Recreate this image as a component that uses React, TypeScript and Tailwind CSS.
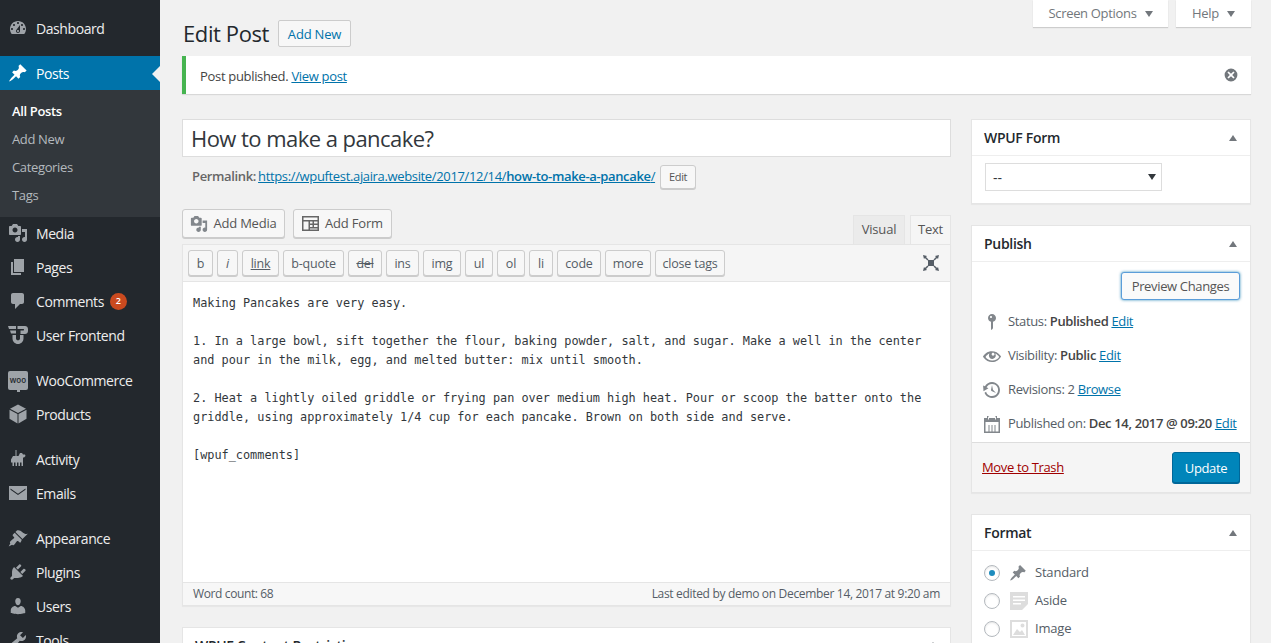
import type { ReactNode } from 'react'

const dashboardPath = 'M3.76 16h12.48c1.1-1.37 1.76-3.11 1.76-5 0-4.42-3.58-8-8-8s-8 3.58-8 8c0 1.89.66 3.63 1.76 5zM10 4c.55 0 1 .45 1 1s-.45 1-1 1-1-.45-1-1 .45-1 1-1zM6 6c.55 0 1 .45 1 1s-.45 1-1 1-1-.45-1-1 .45-1 1-1zm8 0c.55 0 1 .45 1 1s-.45 1-1 1-1-.45-1-1 .45-1 1-1zm-5.37 5.55L12 7v6c0 1.1-.9 2-2 2s-2-.9-2-2c0-.57.24-1.08.63-1.45zM4 10c.55 0 1 .45 1 1s-.45 1-1 1-1-.45-1-1 .45-1 1-1zm12 0c.55 0 1 .45 1 1s-.45 1-1 1-1-.45-1-1 .45-1 1-1zm-5 3c0-.55-.45-1-1-1s-1 .45-1 1 .45 1 1 1 1-.45 1-1z'
const pinPath = 'M10.44 3.02l1.82-1.82 6.36 6.35-1.83 1.82c-1.05-.68-2.48-.57-3.41.36l-.75.75c-.92.93-1.04 2.35-.35 3.41l-1.83 1.82-2.41-2.41-2.8 2.79c-.42.42-3.38 2.71-3.8 2.29s1.86-3.39 2.28-3.81l2.79-2.79L4.1 9.36l1.83-1.82c1.05.69 2.48.57 3.41-.36l.75-.75c.93-.92 1.04-2.35.35-3.41z'
const mediaPath = 'M13 11V4c0-.55-.45-1-1-1h-1.67L9 1H5L3.67 3H2c-.55 0-1 .45-1 1v7c0 .55.45 1 1 1h10c.55 0 1-.45 1-1zM7 4.5c1.38 0 2.5 1.12 2.5 2.5S8.38 9.5 7 9.5 4.5 8.38 4.5 7 5.62 4.5 7 4.5zM14 6h5v10.5c0 1.38-1.12 2.5-2.5 2.5S14 17.88 14 16.5s1.12-2.5 2.5-2.5c.17 0 .34.02.5.05V9h-3V6zm-4 8.05V13h2v3.5c0 1.38-1.12 2.5-2.5 2.5S7 17.88 7 16.5 8.12 14 9.5 14c.17 0 .34.02.5.05z'
const pagePath = 'M6 15V2h10v13H6zm-1 1h8v2H3V5h2v11z'
const commentPath = 'M5 2h9c1.1 0 2 .9 2 2v7c0 1.1-.9 2-2 2h-2l-5 5v-5H5c-1.1 0-2-.9-2-2V4c0-1.1.9-2 2-2z'
const frontendPath = 'M0 1h8v3H1zM2 5.500h6v3H3zM4.500 10H8v3.500c0 1 .9 1.800 2 1.800s2-.8 2-1.800V10h3.500v3.500c0 3-2.500 5.500-5.500 5.500s-5.500-2.500-5.500-5.500zM9.500 1H17c1.700 0 3 1.200 3 3v2c0 1.700-1.300 3-3 3h-4.500V5.500h3c.7 0 .7-1.500 0-1.500h-6z'
const cubePath = 'M10 .5l8 4.300-8 4.200-8-4.200zM1.500 5.800l8 4.200v9.500l-8-4.700zM18.500 5.800v9l-8 4.700V10z'
const mailPath = 'M1 3h18v14H1zM2.500 5.500v1.300L10 12l7.500-5.200V5.500L10 10.700z'
const brushPath = 'M14.480 11.060L7.410 3.990l1.500-1.500c.5-.56 2.300-.47 3.510.32 1.210.8 1.430 1.280 2.910 2.100 1.180.64 2.450 1.260 4.450.85zm-.71.71L6.700 4.700 4.930 6.470c-.39.39-.39 1.020 0 1.410l1.060 1.060c.39.39.39 1.030 0 1.420-.6.6-1.430 1.110-2.210 1.690-.35.26-.7.53-1.010.84-1.340 1.340-.9 1.800-.4 2.300l-1.700 3.300 3.400-1.700c.6.5 1.100.8 2.300-.4.310-.31.58-.66.85-1.010.57-.78 1.080-1.610 1.690-2.210.39-.39 1.020-.39 1.410 0l1.060 1.060c.39.39 1.020.39 1.410 0z'
const plugPath = 'M13.110 4.360L9.870 7.600 8 5.730l3.240-3.240c.35-.34 1.050-.2 1.560.32.52.51.66 1.210.31 1.550zm-8 1.770l.91-1.120 9.010 9.010-1.190.84c-.71.71-2.630 1.160-3.820 1.160H6.140L4.900 17.260c-.59.59-1.540.59-2.120 0-.59-.58-.59-1.530 0-2.120l1.240-1.240v-3.880c0-1.130.4-3.190 1.090-3.890zm7.260 3.970l3.240-3.240c.34-.35 1.040-.21 1.550.31.52.51.66 1.210.31 1.550l-3.240 3.250z'
const userPath = 'M10 9.250c-2.270 0-2.730-3.440-2.730-3.440C7 4.020 7.820 2 9.970 2c2.160 0 2.980 2.020 2.710 3.810 0 0-.41 3.440-2.680 3.440zm0 2.570L12.720 10c2.390 0 4.520 2.330 4.520 4.530v2.490s-3.650 1.130-7.240 1.130c-3.650 0-7.240-1.130-7.240-1.130v-2.490c0-2.250 1.940-4.480 4.470-4.480z'
const toolPath = 'M16.680 9.770c-1.340 1.340-3.300 1.670-4.950.99l-5.410 6.520c-.99.99-2.590.99-3.580 0s-.99-2.590 0-3.570l6.520-5.420c-.68-1.650-.35-3.610.99-4.950 1.280-1.280 3.120-1.620 4.720-1.060l-2.890 2.890 2.820 2.820 2.860-2.870c.53 1.580.18 3.390-1.080 4.650zM3.810 16.210c.4.39 1.040.39 1.430 0 .4-.4.4-1.040 0-1.430-.39-.4-1.030-.4-1.430 0-.39.39-.39 1.030 0 1.430z'
const activityPath = 'M7.500 1h1v6h2l1.500-3h2l1 1.500h2l.5 1.500-1.500 1.500H15V17h-1.500v-3.500H12V17h-1.500v-3.500H9V17H7.500v-3.500H6V17H4.500v-3.500H3V10.500L5 7h2.500z'

function Dash({ d, className }: { d: string; className: string }) {
  return (
    <svg viewBox="0 0 20 20" className={className} fill="currentColor" fillRule="evenodd">
      <path d={d} />
    </svg>
  )
}

function WooIcon() {
  return (
    <div className="relative w-5 h-[19px] rounded-[2px] bg-[#9ea3a8] flex items-center justify-center">
      <span className="text-[8px] leading-none text-[#23282d] font-['Open_Sans',sans-serif] font-semibold">woo</span>
      <span className="absolute left-[9px] -bottom-[2px] w-[3px] h-[3px] bg-[#9ea3a8]"></span>
    </div>
  )
}

function NavItem({ icon, label, badge, current }: { icon: ReactNode; label: string; badge?: string; current?: boolean }) {
  return (
    <div className={current ? 'relative h-[34px] flex items-center bg-[#0073aa] text-white' : 'relative h-[34px] flex items-center text-[#eeeeee]'}>
      <div className={current ? 'w-9 flex justify-center text-white' : 'w-9 flex justify-center text-[#9ea3a8]'}>{icon}</div>
      <span className="text-[14px] tracking-[-0.42px]">{label}</span>
      {badge && (
        <span className="ml-[6px] w-[17px] h-[17px] rounded-full bg-[#ca4a1f] text-white text-[9px] font-semibold flex items-center justify-center">{badge}</span>
      )}
      {current && (
        <span className="absolute right-0 top-[10px] w-0 h-0 border-y-[8px] border-y-transparent border-r-[8px] border-r-[#f1f1f1]"></span>
      )}
    </div>
  )
}

function Sidebar() {
  const ic = 'w-5 h-5'
  return (
    <aside className="w-40 shrink-0 bg-[#23282d] pt-[11px]">
      <NavItem icon={<Dash d={dashboardPath} className={ic} />} label="Dashboard" />
      <div className="h-[11px]"></div>
      <NavItem current icon={<Dash d={pinPath} className={ic} />} label="Posts" />
      <div className="bg-[#32373c] pt-[8px] pb-[7px] text-[13px] tracking-[-0.35px]">
        <div className="h-7 pl-3 flex items-center text-white font-semibold">All Posts</div>
        <div className="h-7 pl-3 flex items-center text-[#b4b9be]">Add New</div>
        <div className="h-7 pl-3 flex items-center text-[#b4b9be]">Categories</div>
        <div className="h-7 pl-3 flex items-center text-[#b4b9be]">Tags</div>
      </div>
      <div className="-mt-px">
        <NavItem icon={<Dash d={mediaPath} className={ic} />} label="Media" />
      </div>
      <NavItem icon={<Dash d={pagePath} className={ic} />} label="Pages" />
      <NavItem icon={<Dash d={commentPath} className={ic} />} label="Comments" badge="2" />
      <NavItem icon={<Dash d={frontendPath} className={ic} />} label="User Frontend" />
      <div className="h-[11px]"></div>
      <NavItem icon={<WooIcon />} label="WooCommerce" />
      <NavItem icon={<Dash d={cubePath} className={ic} />} label="Products" />
      <div className="h-[11px]"></div>
      <NavItem icon={<Dash d={activityPath} className={ic} />} label="Activity" />
      <NavItem icon={<Dash d={mailPath} className={ic} />} label="Emails" />
      <div className="h-[11px]"></div>
      <NavItem icon={<Dash d={brushPath} className={ic} />} label="Appearance" />
      <NavItem icon={<Dash d={plugPath} className={ic} />} label="Plugins" />
      <NavItem icon={<Dash d={userPath} className={ic} />} label="Users" />
      <NavItem icon={<Dash d={toolPath} className={ic} />} label="Tools" />
    </aside>
  )
}

function TabButton({ label, className }: { label: string; className: string }) {
  return (
    <div className={'h-[27px] bg-white shadow-[0_1px_1px_rgba(0,0,0,0.15)] flex items-center justify-center gap-[8px] text-[13px] tracking-[-0.32px] text-[#72777c] ' + className}>
      {label}
      <span className="w-0 h-0 border-x-[4.5px] border-x-transparent border-t-[6px] border-t-[#72777c]"></span>
    </div>
  )
}

function Toolbar() {
  const buttons = [
    { label: 'b', w: 'w-[25px]' },
    { label: 'i', w: 'w-[21px] italic' },
    { label: 'link', w: 'w-[37px] underline' },
    { label: 'b-quote', w: 'w-[61px]' },
    { label: 'del', w: 'w-[34px] line-through' },
    { label: 'ins', w: 'w-[33px]' },
    { label: 'img', w: 'w-[38px]' },
    { label: 'ul', w: 'w-[28px]' },
    { label: 'ol', w: 'w-[28px]' },
    { label: 'li', w: 'w-[24px]' },
    { label: 'code', w: 'w-[44px]' },
    { label: 'more', w: 'w-[46px]' },
    { label: 'close tags', w: 'w-[70px]' },
  ]
  return (
    <div className="h-[37px] bg-[#f5f5f5] border-b border-[#e5e5e5] flex items-center pl-[5px] pr-[9px] gap-1">
      {buttons.map((b) => (
        <div
          key={b.label}
          className={'h-[26px] pt-[2px] rounded-[3px] bg-[#f7f7f7] border border-[#cccccc] shadow-[0_1px_0_#cccccc] flex items-center justify-center text-[12.500px] tracking-[-0.2px] text-[#555d66] ' + b.w}
        >
          {b.label}
        </div>
      ))}
      <svg viewBox="0 0 20 20" className="ml-auto w-[20px] h-[20px] text-[#555d66]" fill="currentColor">
        <path d="M7 7h6v6H7zM2 2l4 1-1 .9L7.500 6.500 6.500 7.500 3.900 5 3 6zM18 2l-1 4-.9-1-2.600 2.500-1-1L15 3.900 14 3zM2 18l1-4 .9 1 2.600-2.500 1 1L5 16.100 6 17zM18 18l-4-1 1-.9-2.500-2.600 1-1 2.600 2.500.9-1z" />
      </svg>
    </div>
  )
}

function Editor() {
  return (
    <div>
      <div className="h-[35px] flex items-end justify-between">
        <div className="flex gap-[8px] mb-[6px] text-[13px] tracking-[-0.2px] text-[#555555]">
          <div className="h-[29px] w-[103px] rounded-[3px] bg-[#f7f7f7] border border-[#cccccc] shadow-[0_1px_0_#cccccc] flex items-center justify-center gap-[5px]">
            <Dash d={mediaPath} className="w-[18px] h-[18px] text-[#82878c]" />
            Add Media
          </div>
          <div className="h-[29px] w-[99px] rounded-[3px] bg-[#f7f7f7] border border-[#cccccc] shadow-[0_1px_0_#cccccc] flex items-center justify-center gap-[6px]">
            <svg viewBox="0 0 17 15" className="w-[17px] h-[15px] text-[#666666]" fill="currentColor" fillRule="evenodd">
              <path d="M0 0h17v15H0zM1.500 1.500v2.500h14V1.500zM1.500 5.500v8h5v-8zM8 5.500v2h2.500v-2zM12 5.500v2h3.500v-2zM8 9v2h2.500V9zM12 9v2h3.500V9zM8 12.500v1h7.500v-1z" />
            </svg>
            Add Form
          </div>
        </div>
        <div className="flex gap-[5px] text-[13px] tracking-[-0.2px] text-[#555555]">
          <div className="h-[29px] w-[52px] bg-[#ebebeb] border border-[#e5e5e5] border-b-0 flex items-center justify-center">Visual</div>
          <div className="h-[29px] w-[41px] bg-[#f5f5f5] border border-[#e5e5e5] border-b-0 flex items-center justify-center mr-0">Text</div>
        </div>
      </div>
      <div className="border border-[#e5e5e5] bg-white shadow-[0_1px_1px_rgba(0,0,0,0.04)]">
        <Toolbar />
        <div className="h-[300px] bg-white pl-[10px] pt-[12px] pr-[10px] font-['DejaVu_Sans_Mono',monospace] text-[11.870px] leading-[19px] text-[#32373c] whitespace-pre-wrap">
          <p>Making Pancakes are very easy.</p>
          <p className="mt-[19px]">1. In a large bowl, sift together the flour, baking powder, salt, and sugar. Make a well in the center<br />and pour in the milk, egg, and melted butter: mix until smooth.</p>
          <p className="mt-[19px]">2. Heat a lightly oiled griddle or frying pan over medium high heat. Pour or scoop the batter onto the<br />griddle, using approximately 1/4 cup for each pancake. Brown on both side and serve.</p>
          <p className="mt-[19px]">[wpuf_comments]</p>
        </div>
        <div className="h-[23px] bg-[#f7f7f7] border-t border-[#e5e5e5] flex items-center justify-between px-[10px] text-[12px] text-[#555d66]">
          <span className="tracking-[-0.38px]">Word count: 68</span>
          <span className="tracking-[-0.32px]">Last edited by demo on December 14, 2017 at 9:20 am</span>
        </div>
      </div>
    </div>
  )
}

function Postbox({ title, children, className }: { title: string; children?: ReactNode; className?: string }) {
  return (
    <section className={'bg-white border border-[#e5e5e5] shadow-[0_1px_1px_rgba(0,0,0,0.04)] ' + (className ?? '')}>
      <div className="h-[36px] border-b border-[#eeeeee] flex items-center justify-between pl-[12px] pr-[13px]">
        <h2 className="text-[14px] font-semibold tracking-[-0.3px] text-[#23282d]">{title}</h2>
        <span className="w-0 h-0 border-x-[4px] border-x-transparent border-b-[6px] border-b-[#72777c]"></span>
      </div>
      {children}
    </section>
  )
}

function MetaRow({ icon, children }: { icon: ReactNode; children: ReactNode }) {
  return (
    <div className="h-[34px] flex items-center pl-[10px] text-[13px] tracking-[-0.35px] text-[#555d66]">
      <div className="w-[26px] flex text-[#82878c]">{icon}</div>
      <span>{children}</span>
    </div>
  )
}

function FormatRow({ label, checked, icon }: { label: string; checked?: boolean; icon: ReactNode }) {
  return (
    <div className="h-[28px] flex items-center pl-[12px] text-[13px] tracking-[-0.2px] text-[#555d66]">
      <span className="w-4 h-4 rounded-full border border-[#b4b9be] bg-white shadow-[inset_0_1px_2px_rgba(0,0,0,0.1)] flex items-center justify-center">
        {checked && <span className="w-[6px] h-[6px] rounded-full bg-[#1e8cbe]"></span>}
      </span>
      <span className="ml-[9px] w-[26px] flex">{icon}</span>
      <span>{label}</span>
    </div>
  )
}

function Sidebox() {
  const lnk = 'text-[#0073aa] underline'
  const b = 'font-semibold text-[#444444]'
  return (
    <div className="w-[280px] shrink-0">
      <Postbox title="WPUF Form" className="h-[85px]">
        <div className="pl-[13px] pt-[7px]">
          <div className="relative w-[177px] h-[28px] border border-[#dddddd] bg-white flex items-center pl-[7px] text-[14px] text-[#32373c]">
            --
            <span className="absolute right-[5px] top-[10px] w-0 h-0 border-x-[4px] border-x-transparent border-t-[6px] border-t-[#32373c]"></span>
          </div>
        </div>
      </Postbox>
      <Postbox title="Publish" className="mt-[21px]">
        <div className="h-[180px] pt-[10px]">
          <div className="flex justify-end pr-[10px]">
            <div className="w-[119px] h-[28px] pt-[2px] rounded-[3px] bg-[#fafafa] border border-[#5b9dd9] shadow-[0_0_3px_rgba(0,115,170,0.8)] flex items-center justify-center text-[13px] tracking-[-0.35px] text-[#555555]">Preview Changes</div>
          </div>
          <div className="mt-[5px]">
            <MetaRow icon={<Dash d="M14 6c0 1.860-1.280 3.410-3 3.860V16c0 1-2 2-2 2V9.860c-1.720-.45-3-2-3-3.860 0-2.210 1.790-4 4-4s4 1.790 4 4zM8 5c0 .55.45 1 1 1s1-.45 1-1-.45-1-1-1-1 .45-1 1z" className="w-5 h-5" />}>
              Status: <span className={b}>Published</span> <span className={lnk}>Edit</span>
            </MetaRow>
            <MetaRow icon={<Dash d="M18.300 9.500C15 4.900 8.500 3.800 3.900 7.200c-1.200.9-2.200 2.100-3 3.400.2.4.5.8.8 1.200 3.300 4.600 9.600 5.600 14.200 2.400.9-.7 1.700-1.400 2.400-2.400.3-.4.5-.8.8-1.200-.3-.4-.5-.8-.8-1.100zM10 7.200c.6-.6 1.500-.6 2.100 0s.6 1.500 0 2.100-1.500.6-2.100 0c-.5-.6-.5-1.500 0-2.100zm0 7.400c-2.600 0-5.100-1.400-6.500-3.600 1-1.500 2.400-2.700 4-3.400-.4.6-.6 1.200-.6 1.900 0 1.900 1.600 3.500 3.500 3.400 1.900 0 3.400-1.600 3.400-3.400 0-.7-.2-1.300-.6-1.900 1.600.7 3 1.900 4 3.400-1.500 2.200-3.900 3.600-6.600 3.600z" className="w-5 h-5" />}>
              Visibility: <span className={b}>Public</span> <span className={lnk}>Edit</span>
            </MetaRow>
            <MetaRow icon={<Dash d="M13.650 2.880c3.930 2.010 5.480 6.840 3.470 10.770s-6.830 5.480-10.770 3.470c-1.870-.96-3.200-2.560-3.860-4.400l1.640-1.030c.45 1.570 1.520 2.950 3.080 3.760 3.010 1.540 6.690.35 8.230-2.660 1.550-3.010.36-6.690-2.650-8.240C9.780 3.010 6.100 4.200 4.560 7.210l1.880.97-4.950 3.080-.39-5.820 1.780.91C4.900 2.400 9.750.89 13.650 2.880zm-4.360 7.830C9.110 10.530 9 10.280 9 10c0-.07.03-.12.04-.19h-.01L10 5l.97 4.810L14 13l-4.500-2.120.02-.02c-.08-.04-.16-.09-.23-.15z" className="w-5 h-5" />}>
              Revisions: 2 <span className={lnk}>Browse</span>
            </MetaRow>
            <MetaRow icon={<Dash d="M2 4h3V2h2v2h6V2h2v2h3v15H2zM3.500 8v9.500h3V11h1v6.500h2V11h1v6.500h2V11h1v6.500h3V8zM6 2.500v3h.9v-3zM13.100 2.500v3h.9v-3z" className="w-5 h-5" />}>
              Published on: <span className={b}>Dec 14, 2017 @ 09:20</span> <span className={lnk}>Edit</span>
            </MetaRow>
          </div>
        </div>
        <div className="h-[50px] bg-[#f5f5f5] border-t border-[#dddddd] flex items-center justify-between pl-[10px] pr-[10px] text-[13px] tracking-[-0.35px]">
          <span className="text-[#a00000] underline">Move to Trash</span>
          <div className="w-[68px] h-[31px] pt-[2px] rounded-[3px] bg-[#0085ba] border border-[#006799] shadow-[0_1px_0_#006799] flex items-center justify-center text-white">Update</div>
        </div>
      </Postbox>
      <Postbox title="Format" className="mt-[21px]">
        <div className="pt-[8px]">
          <FormatRow checked label="Standard" icon={<Dash d={pinPath} className="w-[18px] h-[18px] text-[#82878c]" />} />
          <FormatRow
            label="Aside"
            icon={
              <svg viewBox="0 0 20 20" className="w-[20px] h-[20px] text-[#dddddd]" fill="currentColor" fillRule="evenodd">
                <path d="M1 1h18v12l-6 6H1zM4 5v1.500h12V5zM4 8.500V10h12V8.500zM4 12v1.500h8V12z" />
              </svg>
            }
          />
          <FormatRow
            label="Image"
            icon={
              <svg viewBox="0 0 20 20" className="w-[20px] h-[20px] text-[#dddddd]" fill="currentColor" fillRule="evenodd">
                <path d="M1 1h18v18H1zM3 3v14h14V3zM4 16l4-6 3 3 2-2 3 5zM13.500 4.500a2 2 0 1 1 0 4 2 2 0 0 1 0-4z" />
              </svg>
            }
          />
        </div>
      </Postbox>
    </div>
  )
}

export default function App() {
  return (
    <div className="h-screen overflow-hidden flex bg-[#f1f1f1] font-['Open_Sans',sans-serif] text-[13px]">
      <Sidebar />
      <main className="flex-1 min-w-0 pl-[22px] pr-[20px]">
        <div className="h-[56px] flex justify-between">
          <div className="flex items-center h-[47px] pt-[20px]">
            <h1 className="pl-[1px] text-[22px] tracking-[-0.4px] text-[#23282d]">Edit Post</h1>
            <div className="ml-[9px] w-[73px] h-[27px] pt-[2px] rounded-[2px] bg-[#f7f7f7] border border-[#cccccc] flex items-center justify-center text-[13px] font-medium tracking-[-0.2px] text-[#0073aa]">Add New</div>
          </div>
          <div className="flex gap-[8px]">
            <TabButton label="Screen Options" className="w-[135px]" />
            <TabButton label="Help" className="w-[75px]" />
          </div>
        </div>
        <div className="h-[38px] bg-white border-l-4 border-[#46b450] shadow-[0_1px_1px_rgba(0,0,0,0.1)] flex items-center justify-between pl-[14px] pr-[12px] text-[13px] tracking-[-0.32px] text-[#444444]">
          <span className="mt-[3px]">Post published. <span className="text-[#0073aa] underline">View post</span></span>
          <svg viewBox="0 0 20 20" className="w-[16px] h-[16px] text-[#72777c]" fill="currentColor" fillRule="evenodd">
            <path d="M10 2a8 8 0 1 1 0 16 8 8 0 0 1 0-16zM13 5.500L10 8.500 7 5.500 5.500 7l3 3-3 3L7 14.500l3-3 3 3 1.500-1.500-3-3 3-3z" />
          </svg>
        </div>
        <div className="mt-[25px] flex gap-[20px]">
          <div className="flex-1 min-w-0">
            <div className="h-[38px] bg-white border border-[#dddddd] flex items-center pl-[8px] text-[22px] tracking-[-0.55px] text-[#32373c]">How to make a pancake?</div>
            <div className="h-[40px] flex items-center pl-[10px] text-[13px] tracking-[-0.35px] text-[#666666]">
              <span className="font-semibold">Permalink:</span>
              <span className="ml-[2px] text-[#0073aa] underline">https://wpuftest.ajaira.website/2017/12/14/<span className="font-semibold">how-to-make-a-pancake</span>/</span>
              <div className="ml-[5px] w-[36px] h-[24px] rounded-[3px] bg-[#f7f7f7] border border-[#cccccc] shadow-[0_1px_0_#cccccc] flex items-center justify-center text-[11px] text-[#555555]">Edit</div>
            </div>
            <div className="h-[12px]"></div>
            <Editor />
            <div className="mt-[21px] h-[40px] bg-white border border-[#e5e5e5] flex items-start justify-between pl-[12px] pr-[13px] pt-[7px]">
              <h2 className="text-[14px] font-semibold tracking-[-0.3px] text-[#23282d]">WPUF Content Restriction</h2>
              <span className="mt-[7px] w-0 h-0 border-x-[4px] border-x-transparent border-b-[6px] border-b-[#72777c]"></span>
            </div>
          </div>
          <Sidebox />
        </div>
      </main>
    </div>
  )
}
